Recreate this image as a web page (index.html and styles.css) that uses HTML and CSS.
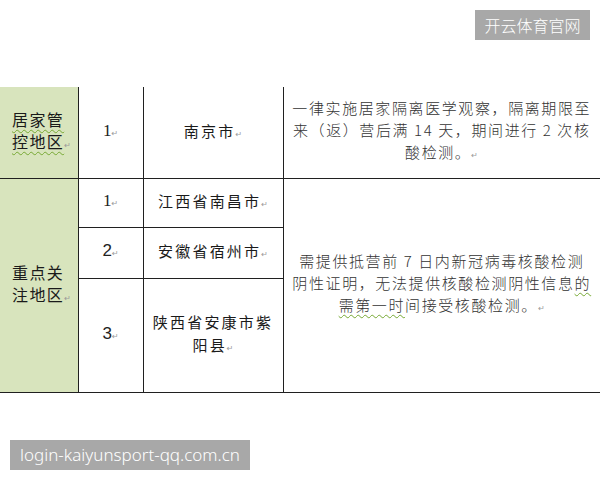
FILE: index.html
```html
<!DOCTYPE html>
<html lang="zh-CN">
<head>
<meta charset="utf-8">
<title>管控地区</title>
<link rel="stylesheet" href="styles.css">
</head>
<body>
<div class="top">
  <div class="badge badge-top">开云体育官网</div>
</div>
<table class="zones">
  <colgroup>
    <col class="c1"><col class="c2"><col class="c3"><col class="c4">
  </colgroup>
  <tr class="r1">
    <td class="area"><span class="sq">居家管</span><br><span class="sq">控地区</span><span class="pm">↵</span></td>
    <td class="num serif">1<span class="pm">↵</span></td>
    <td class="city">南京市<span class="pm">↵</span></td>
    <td class="desc">一律实施居家隔离医学观察，隔离期限至<br>来（返）营后满 14 天，期间进行 2 次核<br>酸检测。<span class="pm">↵</span></td>
  </tr>
  <tr class="r2">
    <td class="area" rowspan="3">重点关<br>注地区<span class="pm">↵</span></td>
    <td class="num serif">1<span class="pm">↵</span></td>
    <td class="city">江西省南昌市<span class="pm">↵</span></td>
    <td class="desc" rowspan="3">需提供抵营前 7 日内新冠病毒核酸检测<br>阴性证明，无法提供核酸检测阴性信息<span class="sq">的</span><br><span class="sq">需第一时</span>间接受核酸检测。<span class="pm">↵</span></td>
  </tr>
  <tr class="r3">
    <td class="num">2<span class="pm">↵</span></td>
    <td class="city">安徽省宿州市<span class="pm">↵</span></td>
  </tr>
  <tr class="r4">
    <td class="num">3<span class="pm">↵</span></td>
    <td class="city">陕西省安康市紫<br>阳县<span class="pm">↵</span></td>
  </tr>
</table>
<div class="bottom">
  <div class="badge badge-bottom">login-kaiyunsport-qq.com.cn</div>
</div>
</body>
</html>
```
FILE: styles.css
```css
html, body {
  margin: 0;
  padding: 0;
  background: #ffffff;
}
body {
  width: 600px;
  height: 480px;
  overflow: hidden;
  font-family: "Noto Sans CJK SC", "Noto Sans", sans-serif;
  color: #1e1e1e;
}
.top {
  height: 87px;
  display: flex;
  justify-content: flex-end;
  align-items: flex-start;
  padding: 10px 10px 0 0;
  box-sizing: border-box;
}
.badge {
  background: #a8a8a8;
  color: #ffffff;
  height: 30px;
  line-height: 30px;
  text-align: center;
  font-size: 16px;
}
.badge-top {
  width: 115px;
  font-family: "Noto Sans CJK SC", sans-serif;
  font-weight: 300;
}
.bottom {
  display: flex;
  padding: 47px 0 0 10px;
}
.badge-bottom {
  width: 240px;
  font-family: "Noto Sans", "Liberation Sans", sans-serif;
  font-size: 17px;
  font-weight: 300;
}
.zones {
  width: 600px;
  table-layout: fixed;
  border-collapse: collapse;
  border-spacing: 0;
}
.c1 { width: 78px; }
.c2 { width: 65px; }
.c3 { width: 140px; }
.c4 { width: 317px; }
.zones td {
  border: 1px solid #202020;
  padding: 0;
  vertical-align: middle;
  text-align: center;
  line-height: 22px;
}
.zones tr td:first-child { border-left: none; }
.zones td.desc { border-right: none; }
.zones tr.r1 td { border-top: none; }
.r1 { height: 91px; }
.r2 { height: 49px; }
.r3 { height: 51px; }
.r4 { height: 114px; }
.area {
  background: #d8e4bd;
  text-align: left !important;
  padding-left: 12px !important;
  font-size: 16px;
  letter-spacing: 1.4px;
  color: #1a1a1a;
}
.num {
  font-family: "Liberation Sans", sans-serif;
  font-size: 17px;
  color: #222;
}
.num.serif {
  font-family: "Liberation Serif", serif;
}
.city {
  font-size: 15px;
  letter-spacing: 2.2px;
  line-height: 23px !important;
  color: #1a1a1a;
}
.desc {
  font-size: 15px;
  letter-spacing: 1.6px;
  font-weight: 300;
  color: #333333;
}
.pm {
  font-family: "DejaVu Sans", sans-serif;
  font-size: 8px;
  color: #9a9a9a;
  letter-spacing: 0;
  vertical-align: baseline;
}
.sq {
  text-decoration: underline wavy #76a832;
  text-decoration-thickness: 1px;
  text-underline-offset: 3px;
}
```
